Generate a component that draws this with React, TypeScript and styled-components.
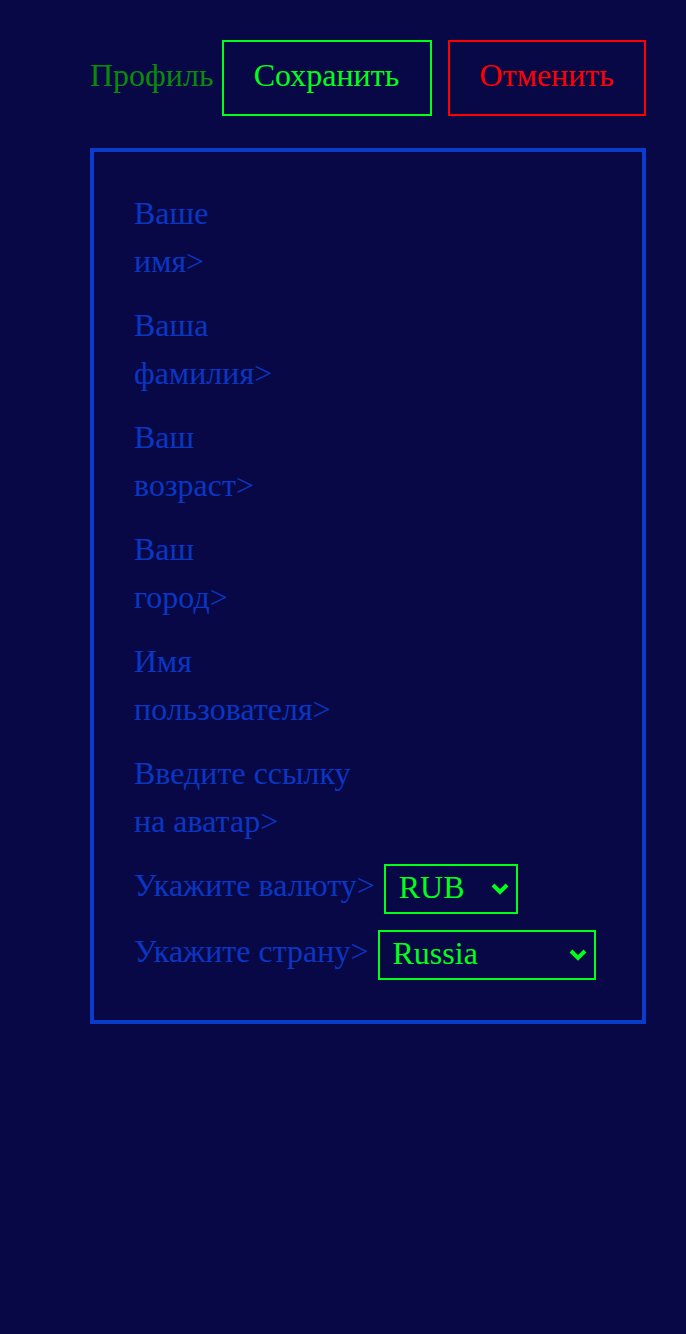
import React from 'react'
import styled, { createGlobalStyle } from 'styled-components'

const GlobalStyle = createGlobalStyle`
  html, body {
    margin: 0;
    padding: 0;
    background-color: #090846;
  }
  body {
    font-family: "Liberation Serif", "Times New Roman", serif;
    min-height: 1334px;
  }
`

const Page = styled.div`
  padding: 40px 40px 40px 90px;
  font-size: 32px;
  line-height: 48px;
`

const Header = styled.div`
  display: flex;
  align-items: center;
  height: 76px;
`

const Title = styled.span`
  color: #0a8a0a;
  margin-right: 8px;
  margin-bottom: 6px;
`

const Button = styled.button<{ $tone: 'save' | 'cancel' }>`
  height: 76px;
  padding: 0 30px 6px;
  background: transparent;
  font-family: inherit;
  font-size: 32px;
  cursor: pointer;
  color: ${(p) => (p.$tone === 'save' ? '#00ff1a' : '#ff0000')};
  border: 2px solid ${(p) => (p.$tone === 'save' ? '#00ff1a' : '#ff0000')};
  width: ${(p) => (p.$tone === 'save' ? '210px' : '198px')};
  margin-left: ${(p) => (p.$tone === 'save' ? '0' : '16px')};
`

const Panel = styled.div`
  margin-top: 32px;
  border: 4px solid #0a3ccc;
  padding: 37px 40px 40px 40px;
  display: flex;
  flex-direction: column;
  gap: 16px;
`

const Label = styled.label`
  display: block;
  color: #0a36c4;
`

const SelectRow = styled.div<{ $last?: boolean }>`
  display: flex;
  align-items: flex-start;
  gap: ${(p) => (p.$last ? '10px' : '9px')};
  margin-top: ${(p) => (p.$last ? '-3px' : '0')};
`

const SelectBox = styled.div<{ $width: number; $inset: number }>`
  position: relative;
  margin-top: 3px;
  width: ${(p) => p.$width}px;
  height: 50px;
  box-sizing: border-box;
  border: 2px solid #00ff1a;

  select {
    padding-left: ${(p) => p.$inset}px;
  }
`

const Select = styled.select`
  appearance: none;
  display: block;
  width: 100%;
  height: 42px;
  background: transparent;
  border: none;
  outline: none;
  color: #00ff1a;
  font-family: inherit;
  font-size: 32px;
  padding: 0 12px;
`

const Chevron = styled.svg`
  position: absolute;
  right: 7px;
  top: 15px;
  pointer-events: none;
`

const fields = [
  ['Ваше', 'имя>'],
  ['Ваша', 'фамилия>'],
  ['Ваш', 'возраст>'],
  ['Ваш', 'город>'],
  ['Имя', 'пользователя>'],
  ['Введите ссылку', 'на аватар>'],
]

function Dropdown({ width, value, inset }: { width: number; value: string; inset: number }) {
  return (
    <SelectBox $width={width} $inset={inset}>
      <Select defaultValue={value}>
        <option>{value}</option>
      </Select>
      <Chevron width="18" height="14" viewBox="0 0 18 14">
        <polyline points="2,4 9,11 16,4" fill="none" stroke="#00ff1a" strokeWidth="4" />
      </Chevron>
    </SelectBox>
  )
}

export default function App() {
  return (
    <>
      <GlobalStyle />
      <Page>
        <Header>
          <Title>Профиль</Title>
          <Button $tone="save">Сохранить</Button>
          <Button $tone="cancel">Отменить</Button>
        </Header>
        <Panel>
          {fields.map(([a, b]) => (
            <Label key={a + b}>
              {a}
              <br />
              {b}
            </Label>
          ))}
          <SelectRow>
            <Label>Укажите валюту&gt;</Label>
            <Dropdown width={134} value="RUB" inset={13} />
          </SelectRow>
          <SelectRow $last>
            <Label>Укажите страну&gt;</Label>
            <Dropdown width={218} value="Russia" inset={12} />
          </SelectRow>
        </Panel>
      </Page>
    </>
  )
}
